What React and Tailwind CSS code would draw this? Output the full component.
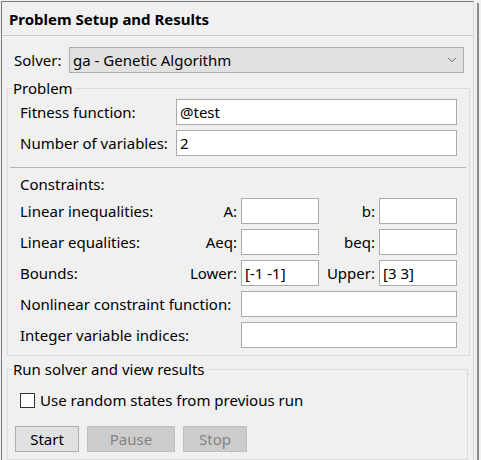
import { ChevronDown } from "lucide-react";

const font = { fontFamily: '"Noto Sans", "Liberation Sans", sans-serif' };

function Field({ value = "", className = "" }) {
  return (
    <div
      className={
        "h-[26px] bg-white border border-[#ababab] px-[3px] flex items-center text-[15px] text-black " +
        className
      }
    >
      {value}
    </div>
  );
}

function SmallRow({ label, a, aVal, b, bVal }) {
  return (
    <div className="flex items-center h-[26px]">
      <div className="w-[150px]">{label}</div>
      <div className="w-[71px] text-right pr-[4px]">{a}</div>
      <Field value={aVal} className="w-[78px]" />
      <div className="w-[60px] text-right pr-[4px]">{b}</div>
      <Field value={bVal} className="w-[78px]" />
    </div>
  );
}

function WideRow({ label, value, labelWidth }) {
  return (
    <div className="flex items-center h-[26px]">
      <div className={labelWidth}>{label}</div>
      <Field value={value} className="flex-1" />
    </div>
  );
}

export default function App() {
  return (
    <div
      className="w-[481px] h-[460px] bg-[#f0f0f0] overflow-hidden flex text-[15px] text-black leading-5"
      style={font}
    >
      <div className="ml-[1px] mt-px w-[473px] border-l border-t border-[#7a7a7a] border-r border-r-[#d9d9d9] flex flex-col">
        <div className="h-[34px] flex items-center pl-[7px] border-b border-[#c8c8c8] font-bold text-[15px]">
          Problem Setup and Results
        </div>

        <div className="flex items-center mt-[11px] pl-[12px] pr-[9px] h-[26px]">
          <span className="w-[55px]">Solver:</span>
          <div className="flex-1 h-[26px] bg-[#e1e1e1] border border-[#adadad] flex items-center pl-[3px] pr-[4px]">
            <span className="flex-1">ga - Genetic Algorithm</span>
            <ChevronDown size={14} strokeWidth={1.3} className="text-[#444]" />
          </div>
        </div>

        <fieldset className="mt-[5px] mx-[5px] border border-[#dcdcdc] pl-[4px] pr-[12px] pb-[7px]">
          <legend className="px-px leading-5">Problem</legend>
          <div className="pl-[8px] flex flex-col">
            <div className="mt-px flex flex-col gap-[5px]">
              <WideRow label="Fitness function:" value="@test" labelWidth="w-[156px]" />
              <WideRow label="Number of variables:" value="2" labelWidth="w-[156px]" />
            </div>
            <div className="mt-[11px] -ml-[10px] -mr-[9px] border-t border-[#b4b4b4]" />
            <div className="mt-[6px] h-5">Constraints:</div>
            <div className="mt-[4px] flex flex-col gap-[5px]">
              <SmallRow label="Linear inequalities:" a="A:" b="b:" />
              <SmallRow label="Linear equalities:" a="Aeq:" b="beq:" />
              <SmallRow label="Bounds:" a="Lower:" aVal="[-1 -1]" b="Upper:" bVal="[3 3]" />
              <WideRow label="Nonlinear constraint function:" labelWidth="w-[221px]" />
              <WideRow label="Integer variable indices:" labelWidth="w-[221px]" />
            </div>
          </div>
        </fieldset>

        <fieldset className="mt-[3px] mx-[5px] border border-[#dcdcdc] pl-[4px] flex-1">
          <legend className="px-px leading-5">Run solver and view results</legend>
          <div className="pl-[8px] flex items-center gap-[5px] mt-[11px]">
            <span className="w-[15px] h-[15px] bg-white border border-[#333]" />
            <span>Use random states from previous run</span>
          </div>
          <div className="flex gap-[8px] mt-[16px] pl-[3px]">
            <button className="w-[64px] h-[26px] bg-[#e1e1e1] border border-[#adadad] text-black">
              Start
            </button>
            <button className="w-[88px] h-[26px] bg-[#cccccc] border border-[#bfbfbf] text-[#838383]">
              Pause
            </button>
            <button className="w-[64px] h-[26px] bg-[#cccccc] border border-[#bfbfbf] text-[#838383]">
              Stop
            </button>
          </div>
        </fieldset>
      </div>
      <div className="w-[6px] flex">
        <div className="ml-[3px] mt-[3px] w-[2px] bg-[#8a8a8a]" />
      </div>
    </div>
  );
}
